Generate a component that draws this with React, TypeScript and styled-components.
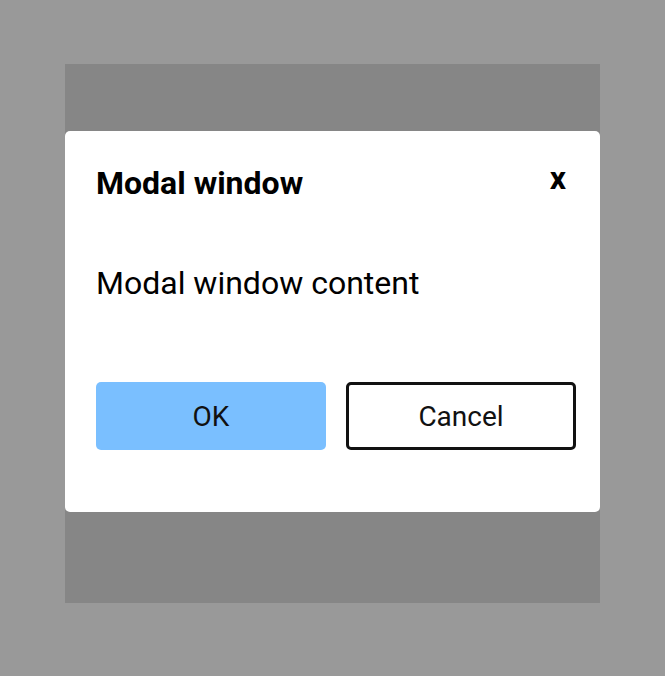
import React from 'react'
import styled, { createGlobalStyle } from 'styled-components'

const GlobalStyle = createGlobalStyle`
    body {
        margin: 0;
        background: #999999;
        font-family: Roboto, 'Liberation Sans', sans-serif;
    }
`

const Page = styled.div`
    padding: 64px 65px 73px;
`

const Overlay = styled.div`
    height: 539px;
    background: #868686;
    padding-top: 67px;
    box-sizing: border-box;
`

const Modal = styled.div`
    background: #ffffff;
    border-radius: 5px;
    padding: 33px 24px 62px 31px;
`

const Header = styled.div`
    display: flex;
    align-items: flex-start;
    justify-content: space-between;
`

const Title = styled.h2`
    margin: 0;
    font-size: 32px;
    font-weight: 700;
    color: #000000;
`

const CloseButton = styled.button`
    border: none;
    background: none;
    padding: 0;
    margin: -2px 10px 0 0;
    font-family: inherit;
    font-size: 32px;
    font-weight: 700;
    line-height: 1;
    color: #000000;
    cursor: pointer;
`

const Content = styled.p`
    margin: 62px 0 0;
    font-size: 32px;
    color: #000000;
`

const Actions = styled.div`
    display: flex;
    gap: 20px;
    margin-top: 80px;
`

const Button = styled.button<{ $primary?: boolean }>`
    width: 230px;
    height: 68px;
    box-sizing: border-box;
    border-radius: 5px;
    border: ${(p) => (p.$primary ? 'none' : '3px solid #111111')};
    background: ${(p) => (p.$primary ? '#7abfff' : '#ffffff')};
    font-family: inherit;
    font-size: 28px;
    color: #111111;
    cursor: pointer;
`

const App = () => {
    return (
        <>
            <GlobalStyle />
            <Page>
                <Overlay>
                    <Modal>
                        <Header>
                            <Title>Modal window</Title>
                            <CloseButton>x</CloseButton>
                        </Header>
                        <Content>Modal window content</Content>
                        <Actions>
                            <Button $primary>OK</Button>
                            <Button>Cancel</Button>
                        </Actions>
                    </Modal>
                </Overlay>
            </Page>
        </>
    )
}

export default App
